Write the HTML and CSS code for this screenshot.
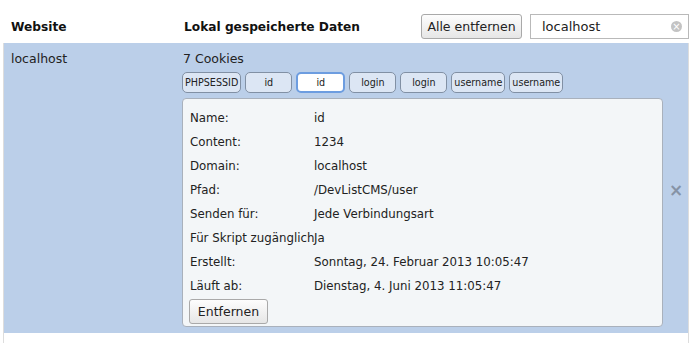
FILE: index.html
```html
<!DOCTYPE html>
<html lang="de">
<head>
    <meta charset="UTF-8">
    <title>Cookies und Websitedaten</title>
    <link rel="stylesheet" href="styles.css">
</head>
<body>
    <div class="container">
        <div class="header">
            <div class="col-site">Website</div>
            <div class="col-data">Lokal gespeicherte Daten</div>
            <button class="btn remove-all">Alle entfernen</button>
            <div class="search">
                <span class="search-text">localhost</span>
                <span class="search-clear">&#215;</span>
            </div>
        </div>

        <div class="row">
            <div class="col-site site-name">localhost</div>
            <div class="col-data">
                <div class="count">7 Cookies</div>
                <div class="cookie-list">
                    <button class="cookie">PHPSESSID</button>
                    <button class="cookie wide">id</button>
                    <button class="cookie wide selected">id</button>
                    <button class="cookie wide">login</button>
                    <button class="cookie wide">login</button>
                    <button class="cookie">username</button>
                    <button class="cookie">username</button>
                </div>
                <div class="details">
                    <div class="detail"><span class="label">Name:</span><span>id</span></div>
                    <div class="detail"><span class="label">Content:</span><span>1234</span></div>
                    <div class="detail"><span class="label">Domain:</span><span>localhost</span></div>
                    <div class="detail"><span class="label">Pfad:</span><span>/DevListCMS/user</span></div>
                    <div class="detail"><span class="label">Senden für:</span><span>Jede Verbindungsart</span></div>
                    <div class="detail"><span class="label">Für Skript zugänglich</span><span>Ja</span></div>
                    <div class="detail"><span class="label">Erstellt:</span><span>Sonntag, 24. Februar 2013 10:05:47</span></div>
                    <div class="detail"><span class="label">Läuft ab:</span><span>Dienstag, 4. Juni 2013 11:05:47</span></div>
                    <button class="btn remove-one">Entfernen</button>
                </div>
            </div>
            <div class="row-close">&#215;</div>
        </div>
    </div>
</body>
</html>
```

FILE: styles.css
```css
body {
    margin: 0;
    font-family: "DejaVu Sans", "Liberation Sans", sans-serif;
    font-size: 12px;
    color: #222;
    background: #fff;
}
.container {
    margin: 0 11px 0 3px;
    border-left: 1px solid #ddd;
    border-right: 1px solid #ddd;
    height: 343px;
}
.header {
    display: flex;
    align-items: center;
    height: 43px;
    background: #fff;
    margin: 0 -1px;
    padding-top: 10px;
    box-sizing: border-box;
}
.header .col-site,
.header .col-data {
    font-weight: bold;
    font-size: 12.2px;
    color: #111;
}
.header .col-data {
    padding-left: 3px;
}
.col-site {
    width: 170px;
    padding-left: 8px;
    flex-shrink: 0;
}
.col-data {
    flex: 1;
}
.btn {
    font-family: inherit;
    font-size: 12.5px;
    color: #222;
    background: linear-gradient(#fdfdfd, #e6e6e6);
    border: 1px solid #a9a9a9;
    border-radius: 3px;
    cursor: pointer;
}
.remove-all {
    height: 25px;
    width: 101px;
    padding: 0;
    margin-right: 8px;
}
.search {
    display: flex;
    align-items: center;
    justify-content: space-between;
    width: 159px;
    height: 25px;
    box-sizing: border-box;
    border: 1px solid #b9b9b9;
    padding: 0 6px 0 11px;
    font-size: 13px;
    background: #fff;
}
.search-clear {
    display: inline-flex;
    align-items: center;
    justify-content: center;
    width: 11px;
    height: 11px;
    border-radius: 50%;
    background: #c3c3c3;
    color: #fff;
    font-size: 10px;
    line-height: 1;
}
.row {
    display: flex;
    background: #bbcfe9;
    height: 290px;
    padding-top: 8px;
    box-sizing: border-box;
}
.site-name {
    font-size: 12.5px;
    color: #222;
    padding-left: 7px;
    width: 171px;
}
.count {
    font-size: 12.5px;
    margin-left: 1px;
    margin-bottom: 6px;
}
.cookie-list {
    display: flex;
    gap: 4px;
    margin-bottom: 5px;
}
.cookie {
    font-family: inherit;
    font-size: 9.6px;
    height: 21px;
    padding: 0 2px;
    color: #222;
    background: #dce6f4;
    border: 1px solid #8190a4;
    border-radius: 5px;
}
.cookie.wide {
    width: 47px;
}
.cookie.selected {
    width: 49px;
    background: #fff;
    border: 2px solid #6d9de0;
}
.details {
    width: 481px;
    height: 229px;
    box-sizing: border-box;
    background: #f3f6f8;
    border: 1px solid #a9b1bc;
    border-radius: 4px;
    padding: 7px 6px 0;
}
.detail {
    display: flex;
    height: 24px;
    align-items: center;
    font-size: 11.8px;
    padding-left: 1px;
}
.detail .label {
    width: 124px;
    flex-shrink: 0;
    white-space: nowrap;
}
.remove-one {
    height: 25px;
    width: 79px;
    padding: 0;
    margin-top: 1px;
}
.row-close {
    width: 24px;
    padding-top: 129px;
    text-align: center;
    color: #8693a6;
    font-size: 17px;
    font-weight: bold;
}
```
